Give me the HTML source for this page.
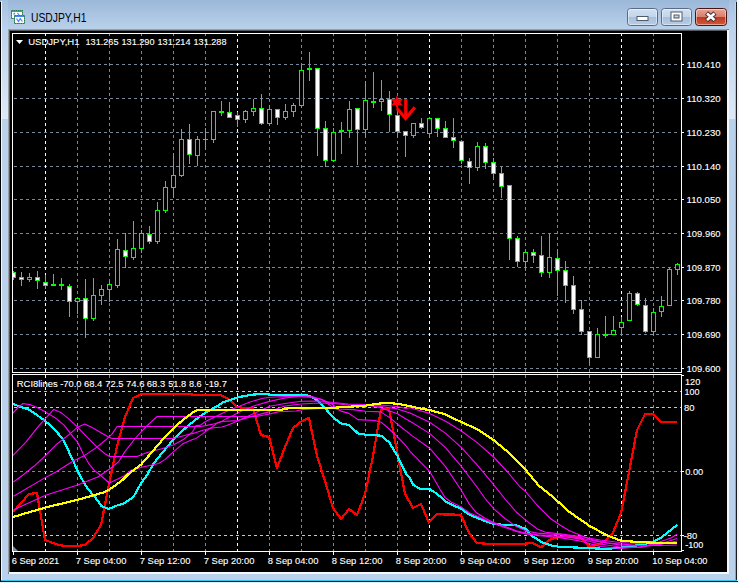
<!DOCTYPE html><html><head><meta charset="utf-8"><title>USDJPY,H1</title>
<style>html,body{margin:0;padding:0;background:#b9d1ea;overflow:hidden}svg{display:block}text{font-family:"Liberation Sans",sans-serif}</style></head><body>
<svg width="739" height="583" viewBox="0 0 739 583">
<defs>
<linearGradient id="tb" x1="0" y1="0" x2="0" y2="1"><stop offset="0" stop-color="#9bb8d9"/><stop offset="1" stop-color="#bdd3ec"/></linearGradient>
<linearGradient id="bt" x1="0" y1="0" x2="0" y2="1"><stop offset="0" stop-color="#d3e1f1"/><stop offset="0.48" stop-color="#c2d5ea"/><stop offset="0.52" stop-color="#a8c0dd"/><stop offset="1" stop-color="#b7cde6"/></linearGradient>
<linearGradient id="bc" x1="0" y1="0" x2="0" y2="1"><stop offset="0" stop-color="#e8a898"/><stop offset="0.48" stop-color="#d9806e"/><stop offset="0.52" stop-color="#bf3a20"/><stop offset="1" stop-color="#cf5a3c"/></linearGradient>
<linearGradient id="cy" x1="0" y1="0" x2="0" y2="1"><stop offset="0" stop-color="#a8dff6"/><stop offset="0.1" stop-color="#8fd8f5"/><stop offset="0.3" stop-color="#4cd0ff"/><stop offset="1" stop-color="#35c7f0"/></linearGradient>
<linearGradient id="hl" x1="0" y1="0" x2="0" y2="1"><stop offset="0" stop-color="#a5c0df"/><stop offset="0.25" stop-color="#bdd3ec"/><stop offset="1" stop-color="#dde9f6"/></linearGradient>
</defs>
<rect x="0" y="0" width="739" height="583" fill="#b9d1ea"/>
<rect x="0" y="0" width="739" height="32" fill="url(#tb)"/>
<g shape-rendering="crispEdges">
<rect x="0" y="2" width="1" height="581" fill="#000"/>
<rect x="1" y="1" width="1" height="580" fill="#f4f8fc"/>
<rect x="737" y="0" width="2" height="583" fill="#f4f7fb"/>
<rect x="736" y="2" width="1" height="580" fill="#1a1a1a"/>
<rect x="735" y="2" width="1" height="579" fill="url(#cy)"/>
<rect x="2" y="0" width="6" height="119" fill="url(#hl)"/>
<rect x="729" y="0" width="6" height="119" fill="url(#hl)"/>
<rect x="0" y="581" width="738" height="1" fill="#1a1a1a"/>
<rect x="1" y="580" width="736" height="1" fill="#35c7f0"/>
<rect x="0" y="582" width="739" height="1" fill="#e8eef5"/>
<rect x="8" y="29" width="721" height="545" fill="#6e7a88"/>
<rect x="9" y="30" width="720" height="544" fill="#f4f8fc"/>
<rect x="8" y="29" width="719" height="543" fill="#9a9ea3"/>
<rect x="9" y="30" width="718" height="542" fill="#55585c"/>
<rect x="10" y="31" width="717" height="541" fill="#000"/>
</g>
<g shape-rendering="crispEdges" fill="none" stroke-width="1">
<line x1="14" x2="680" y1="64.5" y2="64.5" stroke="#778899" stroke-dasharray="3 3"/>
<line x1="14" x2="680" y1="98.5" y2="98.5" stroke="#778899" stroke-dasharray="3 3"/>
<line x1="14" x2="680" y1="132.5" y2="132.5" stroke="#778899" stroke-dasharray="3 3"/>
<line x1="14" x2="680" y1="166.5" y2="166.5" stroke="#778899" stroke-dasharray="3 3"/>
<line x1="14" x2="680" y1="199.5" y2="199.5" stroke="#778899" stroke-dasharray="3 3"/>
<line x1="14" x2="680" y1="233.5" y2="233.5" stroke="#778899" stroke-dasharray="3 3"/>
<line x1="14" x2="680" y1="267.5" y2="267.5" stroke="#778899" stroke-dasharray="3 3"/>
<line x1="14" x2="680" y1="300.5" y2="300.5" stroke="#778899" stroke-dasharray="3 3"/>
<line x1="14" x2="680" y1="334.5" y2="334.5" stroke="#778899" stroke-dasharray="3 3"/>
<line x1="14" x2="680" y1="368.5" y2="368.5" stroke="#778899" stroke-dasharray="3 3"/>
<line x1="45.5" x2="45.5" y1="33" y2="372" stroke="#ffffff" stroke-dasharray="3 3"/>
<line x1="45.5" x2="45.5" y1="375" y2="551" stroke="#ffffff" stroke-dasharray="3 3"/>
<line x1="77.5" x2="77.5" y1="33" y2="372" stroke="#778899" stroke-dasharray="3 3"/>
<line x1="77.5" x2="77.5" y1="375" y2="551" stroke="#778899" stroke-dasharray="3 3"/>
<line x1="109.5" x2="109.5" y1="33" y2="372" stroke="#778899" stroke-dasharray="3 3"/>
<line x1="109.5" x2="109.5" y1="375" y2="551" stroke="#778899" stroke-dasharray="3 3"/>
<line x1="141.5" x2="141.5" y1="33" y2="372" stroke="#778899" stroke-dasharray="3 3"/>
<line x1="141.5" x2="141.5" y1="375" y2="551" stroke="#778899" stroke-dasharray="3 3"/>
<line x1="173.5" x2="173.5" y1="33" y2="372" stroke="#778899" stroke-dasharray="3 3"/>
<line x1="173.5" x2="173.5" y1="375" y2="551" stroke="#778899" stroke-dasharray="3 3"/>
<line x1="205.5" x2="205.5" y1="33" y2="372" stroke="#778899" stroke-dasharray="3 3"/>
<line x1="205.5" x2="205.5" y1="375" y2="551" stroke="#778899" stroke-dasharray="3 3"/>
<line x1="237.5" x2="237.5" y1="33" y2="372" stroke="#ffffff" stroke-dasharray="3 3"/>
<line x1="237.5" x2="237.5" y1="375" y2="551" stroke="#ffffff" stroke-dasharray="3 3"/>
<line x1="269.5" x2="269.5" y1="33" y2="372" stroke="#778899" stroke-dasharray="3 3"/>
<line x1="269.5" x2="269.5" y1="375" y2="551" stroke="#778899" stroke-dasharray="3 3"/>
<line x1="301.5" x2="301.5" y1="33" y2="372" stroke="#778899" stroke-dasharray="3 3"/>
<line x1="301.5" x2="301.5" y1="375" y2="551" stroke="#778899" stroke-dasharray="3 3"/>
<line x1="333.5" x2="333.5" y1="33" y2="372" stroke="#778899" stroke-dasharray="3 3"/>
<line x1="333.5" x2="333.5" y1="375" y2="551" stroke="#778899" stroke-dasharray="3 3"/>
<line x1="365.5" x2="365.5" y1="33" y2="372" stroke="#778899" stroke-dasharray="3 3"/>
<line x1="365.5" x2="365.5" y1="375" y2="551" stroke="#778899" stroke-dasharray="3 3"/>
<line x1="397.5" x2="397.5" y1="33" y2="372" stroke="#778899" stroke-dasharray="3 3"/>
<line x1="397.5" x2="397.5" y1="375" y2="551" stroke="#778899" stroke-dasharray="3 3"/>
<line x1="429.5" x2="429.5" y1="33" y2="372" stroke="#ffffff" stroke-dasharray="3 3"/>
<line x1="429.5" x2="429.5" y1="375" y2="551" stroke="#ffffff" stroke-dasharray="3 3"/>
<line x1="461.5" x2="461.5" y1="33" y2="372" stroke="#778899" stroke-dasharray="3 3"/>
<line x1="461.5" x2="461.5" y1="375" y2="551" stroke="#778899" stroke-dasharray="3 3"/>
<line x1="493.5" x2="493.5" y1="33" y2="372" stroke="#778899" stroke-dasharray="3 3"/>
<line x1="493.5" x2="493.5" y1="375" y2="551" stroke="#778899" stroke-dasharray="3 3"/>
<line x1="525.5" x2="525.5" y1="33" y2="372" stroke="#778899" stroke-dasharray="3 3"/>
<line x1="525.5" x2="525.5" y1="375" y2="551" stroke="#778899" stroke-dasharray="3 3"/>
<line x1="557.5" x2="557.5" y1="33" y2="372" stroke="#778899" stroke-dasharray="3 3"/>
<line x1="557.5" x2="557.5" y1="375" y2="551" stroke="#778899" stroke-dasharray="3 3"/>
<line x1="589.5" x2="589.5" y1="33" y2="372" stroke="#778899" stroke-dasharray="3 3"/>
<line x1="589.5" x2="589.5" y1="375" y2="551" stroke="#778899" stroke-dasharray="3 3"/>
<line x1="621.5" x2="621.5" y1="33" y2="372" stroke="#ffffff" stroke-dasharray="3 3"/>
<line x1="621.5" x2="621.5" y1="375" y2="551" stroke="#ffffff" stroke-dasharray="3 3"/>
<line x1="653.5" x2="653.5" y1="33" y2="372" stroke="#778899" stroke-dasharray="3 3"/>
<line x1="653.5" x2="653.5" y1="375" y2="551" stroke="#778899" stroke-dasharray="3 3"/>
<line x1="14" x2="681" y1="391.5" y2="391.5" stroke="#c8c8c8" stroke-dasharray="3 3"/>
<line x1="14" x2="681" y1="407.5" y2="407.5" stroke="#c8c8c8" stroke-dasharray="3 3"/>
<line x1="14" x2="681" y1="471.5" y2="471.5" stroke="#778899" stroke-dasharray="3 3"/>
<line x1="14" x2="681" y1="535.5" y2="535.5" stroke="#c8c8c8" stroke-dasharray="3 3"/>
</g>
<clipPath id="cc"><rect x="13" y="34" width="668" height="338"/></clipPath><g shape-rendering="crispEdges" clip-path="url(#cc)">
<rect x="13" y="271" width="1" height="9" fill="#00ff00"/>
<rect x="11" y="272" width="5" height="6" fill="#00ff00"/>
<rect x="12" y="273" width="3" height="4" fill="#fff"/>
<rect x="21" y="272" width="1" height="14" fill="#00ff00"/>
<rect x="19" y="277" width="5" height="3" fill="#00ff00"/>
<rect x="20" y="278" width="3" height="1" fill="#fff"/>
<rect x="29" y="273" width="1" height="9" fill="#00ff00"/>
<rect x="27" y="277" width="5" height="3" fill="#00ff00"/>
<rect x="28" y="278" width="3" height="1" fill="#000"/>
<rect x="37" y="271" width="1" height="18" fill="#00ff00"/>
<rect x="35" y="277" width="5" height="4" fill="#00ff00"/>
<rect x="36" y="278" width="3" height="2" fill="#fff"/>
<rect x="45" y="275" width="1" height="14" fill="#00ff00"/>
<rect x="43" y="282" width="5" height="4" fill="#00ff00"/>
<rect x="44" y="283" width="3" height="2" fill="#fff"/>
<rect x="53" y="274" width="1" height="12" fill="#00ff00"/>
<rect x="51" y="284" width="5" height="2" fill="#00ff00"/>
<rect x="61" y="278" width="1" height="12" fill="#00ff00"/>
<rect x="59" y="284" width="5" height="2" fill="#00ff00"/>
<rect x="69" y="284" width="1" height="33" fill="#00ff00"/>
<rect x="67" y="286" width="5" height="16" fill="#00ff00"/>
<rect x="68" y="287" width="3" height="14" fill="#fff"/>
<rect x="77" y="297" width="1" height="17" fill="#00ff00"/>
<rect x="75" y="298" width="5" height="4" fill="#00ff00"/>
<rect x="76" y="299" width="3" height="2" fill="#000"/>
<rect x="85" y="279" width="1" height="59" fill="#00ff00"/>
<rect x="83" y="298" width="5" height="21" fill="#00ff00"/>
<rect x="84" y="299" width="3" height="19" fill="#fff"/>
<rect x="93" y="278" width="1" height="43" fill="#00ff00"/>
<rect x="91" y="295" width="5" height="24" fill="#00ff00"/>
<rect x="92" y="296" width="3" height="22" fill="#000"/>
<rect x="101" y="285" width="1" height="20" fill="#00ff00"/>
<rect x="99" y="289" width="5" height="7" fill="#00ff00"/>
<rect x="100" y="290" width="3" height="5" fill="#000"/>
<rect x="109" y="281" width="1" height="21" fill="#00ff00"/>
<rect x="107" y="284" width="5" height="6" fill="#00ff00"/>
<rect x="108" y="285" width="3" height="4" fill="#000"/>
<rect x="117" y="239" width="1" height="49" fill="#00ff00"/>
<rect x="115" y="249" width="5" height="37" fill="#00ff00"/>
<rect x="116" y="250" width="3" height="35" fill="#000"/>
<rect x="125" y="233" width="1" height="35" fill="#00ff00"/>
<rect x="123" y="250" width="5" height="7" fill="#00ff00"/>
<rect x="124" y="251" width="3" height="5" fill="#fff"/>
<rect x="133" y="221" width="1" height="39" fill="#00ff00"/>
<rect x="131" y="248" width="5" height="10" fill="#00ff00"/>
<rect x="132" y="249" width="3" height="8" fill="#000"/>
<rect x="141" y="230" width="1" height="23" fill="#00ff00"/>
<rect x="139" y="233" width="5" height="16" fill="#00ff00"/>
<rect x="140" y="234" width="3" height="14" fill="#000"/>
<rect x="149" y="226" width="1" height="18" fill="#00ff00"/>
<rect x="147" y="234" width="5" height="8" fill="#00ff00"/>
<rect x="148" y="235" width="3" height="6" fill="#fff"/>
<rect x="157" y="202" width="1" height="42" fill="#00ff00"/>
<rect x="155" y="210" width="5" height="32" fill="#00ff00"/>
<rect x="156" y="211" width="3" height="30" fill="#000"/>
<rect x="165" y="181" width="1" height="32" fill="#00ff00"/>
<rect x="163" y="187" width="5" height="24" fill="#00ff00"/>
<rect x="164" y="188" width="3" height="22" fill="#000"/>
<rect x="173" y="153" width="1" height="45" fill="#00ff00"/>
<rect x="171" y="175" width="5" height="13" fill="#00ff00"/>
<rect x="172" y="176" width="3" height="11" fill="#000"/>
<rect x="181" y="129" width="1" height="48" fill="#00ff00"/>
<rect x="179" y="139" width="5" height="37" fill="#00ff00"/>
<rect x="180" y="140" width="3" height="35" fill="#000"/>
<rect x="189" y="124" width="1" height="40" fill="#00ff00"/>
<rect x="187" y="139" width="5" height="16" fill="#00ff00"/>
<rect x="188" y="140" width="3" height="14" fill="#fff"/>
<rect x="197" y="136" width="1" height="30" fill="#00ff00"/>
<rect x="195" y="139" width="5" height="17" fill="#00ff00"/>
<rect x="196" y="140" width="3" height="15" fill="#000"/>
<rect x="205" y="128" width="1" height="22" fill="#00ff00"/>
<rect x="203" y="139" width="5" height="1" fill="#00ff00"/>
<rect x="213" y="111" width="1" height="32" fill="#00ff00"/>
<rect x="211" y="111" width="5" height="29" fill="#00ff00"/>
<rect x="212" y="112" width="3" height="27" fill="#000"/>
<rect x="221" y="101" width="1" height="15" fill="#00ff00"/>
<rect x="219" y="111" width="5" height="2" fill="#00ff00"/>
<rect x="229" y="102" width="1" height="16" fill="#00ff00"/>
<rect x="227" y="112" width="5" height="6" fill="#00ff00"/>
<rect x="228" y="113" width="3" height="4" fill="#fff"/>
<rect x="237" y="112" width="1" height="15" fill="#00ff00"/>
<rect x="235" y="115" width="5" height="5" fill="#00ff00"/>
<rect x="236" y="116" width="3" height="3" fill="#fff"/>
<rect x="245" y="110" width="1" height="13" fill="#00ff00"/>
<rect x="243" y="111" width="5" height="9" fill="#00ff00"/>
<rect x="244" y="112" width="3" height="7" fill="#000"/>
<rect x="253" y="99" width="1" height="17" fill="#00ff00"/>
<rect x="251" y="108" width="5" height="4" fill="#00ff00"/>
<rect x="252" y="109" width="3" height="2" fill="#000"/>
<rect x="261" y="94" width="1" height="31" fill="#00ff00"/>
<rect x="259" y="108" width="5" height="16" fill="#00ff00"/>
<rect x="260" y="109" width="3" height="14" fill="#fff"/>
<rect x="269" y="105" width="1" height="21" fill="#00ff00"/>
<rect x="267" y="109" width="5" height="15" fill="#00ff00"/>
<rect x="268" y="110" width="3" height="13" fill="#000"/>
<rect x="277" y="109" width="1" height="16" fill="#00ff00"/>
<rect x="275" y="109" width="5" height="9" fill="#00ff00"/>
<rect x="276" y="110" width="3" height="7" fill="#fff"/>
<rect x="285" y="104" width="1" height="16" fill="#00ff00"/>
<rect x="283" y="111" width="5" height="7" fill="#00ff00"/>
<rect x="284" y="112" width="3" height="5" fill="#000"/>
<rect x="293" y="103" width="1" height="14" fill="#00ff00"/>
<rect x="291" y="105" width="5" height="7" fill="#00ff00"/>
<rect x="292" y="106" width="3" height="5" fill="#000"/>
<rect x="301" y="65" width="1" height="43" fill="#00ff00"/>
<rect x="299" y="70" width="5" height="36" fill="#00ff00"/>
<rect x="300" y="71" width="3" height="34" fill="#000"/>
<rect x="309" y="52" width="1" height="29" fill="#00ff00"/>
<rect x="307" y="68" width="5" height="2" fill="#00ff00"/>
<rect x="317" y="68" width="1" height="88" fill="#00ff00"/>
<rect x="315" y="68" width="5" height="61" fill="#00ff00"/>
<rect x="316" y="69" width="3" height="59" fill="#fff"/>
<rect x="325" y="121" width="1" height="46" fill="#00ff00"/>
<rect x="323" y="128" width="5" height="33" fill="#00ff00"/>
<rect x="324" y="129" width="3" height="31" fill="#fff"/>
<rect x="333" y="128" width="1" height="34" fill="#00ff00"/>
<rect x="331" y="132" width="5" height="29" fill="#00ff00"/>
<rect x="332" y="133" width="3" height="27" fill="#000"/>
<rect x="341" y="122" width="1" height="32" fill="#00ff00"/>
<rect x="339" y="130" width="5" height="2" fill="#00ff00"/>
<rect x="349" y="101" width="1" height="37" fill="#00ff00"/>
<rect x="347" y="109" width="5" height="22" fill="#00ff00"/>
<rect x="348" y="110" width="3" height="20" fill="#000"/>
<rect x="357" y="108" width="1" height="57" fill="#00ff00"/>
<rect x="355" y="108" width="5" height="22" fill="#00ff00"/>
<rect x="356" y="109" width="3" height="20" fill="#fff"/>
<rect x="365" y="81" width="1" height="57" fill="#00ff00"/>
<rect x="363" y="100" width="5" height="30" fill="#00ff00"/>
<rect x="364" y="101" width="3" height="28" fill="#000"/>
<rect x="373" y="72" width="1" height="36" fill="#00ff00"/>
<rect x="371" y="101" width="5" height="2" fill="#00ff00"/>
<rect x="381" y="80" width="1" height="31" fill="#00ff00"/>
<rect x="379" y="99" width="5" height="3" fill="#00ff00"/>
<rect x="380" y="100" width="3" height="1" fill="#000"/>
<rect x="389" y="91" width="1" height="41" fill="#00ff00"/>
<rect x="387" y="99" width="5" height="16" fill="#00ff00"/>
<rect x="388" y="100" width="3" height="14" fill="#fff"/>
<rect x="397" y="113" width="1" height="25" fill="#00ff00"/>
<rect x="395" y="115" width="5" height="17" fill="#00ff00"/>
<rect x="396" y="116" width="3" height="15" fill="#fff"/>
<rect x="405" y="131" width="1" height="26" fill="#00ff00"/>
<rect x="403" y="131" width="5" height="5" fill="#00ff00"/>
<rect x="404" y="132" width="3" height="3" fill="#fff"/>
<rect x="413" y="123" width="1" height="15" fill="#00ff00"/>
<rect x="411" y="123" width="5" height="13" fill="#00ff00"/>
<rect x="412" y="124" width="3" height="11" fill="#000"/>
<rect x="421" y="118" width="1" height="11" fill="#00ff00"/>
<rect x="419" y="123" width="5" height="5" fill="#00ff00"/>
<rect x="420" y="124" width="3" height="3" fill="#fff"/>
<rect x="429" y="117" width="1" height="21" fill="#00ff00"/>
<rect x="427" y="118" width="5" height="16" fill="#00ff00"/>
<rect x="428" y="119" width="3" height="14" fill="#000"/>
<rect x="437" y="118" width="1" height="19" fill="#00ff00"/>
<rect x="435" y="118" width="5" height="11" fill="#00ff00"/>
<rect x="436" y="119" width="3" height="9" fill="#fff"/>
<rect x="445" y="121" width="1" height="17" fill="#00ff00"/>
<rect x="443" y="128" width="5" height="10" fill="#00ff00"/>
<rect x="444" y="129" width="3" height="8" fill="#fff"/>
<rect x="453" y="118" width="1" height="30" fill="#00ff00"/>
<rect x="451" y="137" width="5" height="4" fill="#00ff00"/>
<rect x="452" y="138" width="3" height="2" fill="#fff"/>
<rect x="461" y="140" width="1" height="24" fill="#00ff00"/>
<rect x="459" y="141" width="5" height="20" fill="#00ff00"/>
<rect x="460" y="142" width="3" height="18" fill="#fff"/>
<rect x="469" y="158" width="1" height="26" fill="#00ff00"/>
<rect x="467" y="161" width="5" height="7" fill="#00ff00"/>
<rect x="468" y="162" width="3" height="5" fill="#fff"/>
<rect x="477" y="142" width="1" height="29" fill="#00ff00"/>
<rect x="475" y="146" width="5" height="22" fill="#00ff00"/>
<rect x="476" y="147" width="3" height="20" fill="#000"/>
<rect x="485" y="143" width="1" height="26" fill="#00ff00"/>
<rect x="483" y="146" width="5" height="17" fill="#00ff00"/>
<rect x="484" y="147" width="3" height="15" fill="#fff"/>
<rect x="493" y="158" width="1" height="22" fill="#00ff00"/>
<rect x="491" y="162" width="5" height="12" fill="#00ff00"/>
<rect x="492" y="163" width="3" height="10" fill="#fff"/>
<rect x="501" y="167" width="1" height="31" fill="#00ff00"/>
<rect x="499" y="173" width="5" height="14" fill="#00ff00"/>
<rect x="500" y="174" width="3" height="12" fill="#fff"/>
<rect x="509" y="185" width="1" height="75" fill="#00ff00"/>
<rect x="507" y="185" width="5" height="54" fill="#00ff00"/>
<rect x="508" y="186" width="3" height="52" fill="#fff"/>
<rect x="517" y="236" width="1" height="31" fill="#00ff00"/>
<rect x="515" y="238" width="5" height="24" fill="#00ff00"/>
<rect x="516" y="239" width="3" height="22" fill="#fff"/>
<rect x="525" y="250" width="1" height="21" fill="#00ff00"/>
<rect x="523" y="252" width="5" height="10" fill="#00ff00"/>
<rect x="524" y="253" width="3" height="8" fill="#000"/>
<rect x="533" y="249" width="1" height="14" fill="#00ff00"/>
<rect x="531" y="252" width="5" height="4" fill="#00ff00"/>
<rect x="532" y="253" width="3" height="2" fill="#fff"/>
<rect x="541" y="236" width="1" height="41" fill="#00ff00"/>
<rect x="539" y="255" width="5" height="18" fill="#00ff00"/>
<rect x="540" y="256" width="3" height="16" fill="#fff"/>
<rect x="549" y="234" width="1" height="44" fill="#00ff00"/>
<rect x="547" y="257" width="5" height="16" fill="#00ff00"/>
<rect x="548" y="258" width="3" height="14" fill="#000"/>
<rect x="557" y="249" width="1" height="47" fill="#00ff00"/>
<rect x="555" y="258" width="5" height="13" fill="#00ff00"/>
<rect x="556" y="259" width="3" height="11" fill="#fff"/>
<rect x="565" y="261" width="1" height="42" fill="#00ff00"/>
<rect x="563" y="270" width="5" height="16" fill="#00ff00"/>
<rect x="564" y="271" width="3" height="14" fill="#fff"/>
<rect x="573" y="276" width="1" height="38" fill="#00ff00"/>
<rect x="571" y="285" width="5" height="25" fill="#00ff00"/>
<rect x="572" y="286" width="3" height="23" fill="#fff"/>
<rect x="581" y="300" width="1" height="35" fill="#00ff00"/>
<rect x="579" y="309" width="5" height="23" fill="#00ff00"/>
<rect x="580" y="310" width="3" height="21" fill="#fff"/>
<rect x="589" y="331" width="1" height="33" fill="#00ff00"/>
<rect x="587" y="331" width="5" height="27" fill="#00ff00"/>
<rect x="588" y="332" width="3" height="25" fill="#fff"/>
<rect x="597" y="328" width="1" height="30" fill="#00ff00"/>
<rect x="595" y="334" width="5" height="24" fill="#00ff00"/>
<rect x="596" y="335" width="3" height="22" fill="#000"/>
<rect x="605" y="316" width="1" height="22" fill="#00ff00"/>
<rect x="603" y="334" width="5" height="2" fill="#00ff00"/>
<rect x="613" y="316" width="1" height="19" fill="#00ff00"/>
<rect x="611" y="330" width="5" height="5" fill="#00ff00"/>
<rect x="612" y="331" width="3" height="3" fill="#000"/>
<rect x="621" y="317" width="1" height="19" fill="#00ff00"/>
<rect x="619" y="322" width="5" height="6" fill="#00ff00"/>
<rect x="620" y="323" width="3" height="4" fill="#000"/>
<rect x="629" y="291" width="1" height="30" fill="#00ff00"/>
<rect x="627" y="293" width="5" height="28" fill="#00ff00"/>
<rect x="628" y="294" width="3" height="26" fill="#000"/>
<rect x="637" y="292" width="1" height="14" fill="#00ff00"/>
<rect x="635" y="293" width="5" height="12" fill="#00ff00"/>
<rect x="636" y="294" width="3" height="10" fill="#fff"/>
<rect x="645" y="298" width="1" height="35" fill="#00ff00"/>
<rect x="643" y="305" width="5" height="27" fill="#00ff00"/>
<rect x="644" y="306" width="3" height="25" fill="#fff"/>
<rect x="653" y="308" width="1" height="27" fill="#00ff00"/>
<rect x="651" y="312" width="5" height="20" fill="#00ff00"/>
<rect x="652" y="313" width="3" height="18" fill="#000"/>
<rect x="661" y="296" width="1" height="21" fill="#00ff00"/>
<rect x="659" y="306" width="5" height="6" fill="#00ff00"/>
<rect x="660" y="307" width="3" height="4" fill="#000"/>
<rect x="669" y="267" width="1" height="39" fill="#00ff00"/>
<rect x="667" y="269" width="5" height="37" fill="#00ff00"/>
<rect x="668" y="270" width="3" height="35" fill="#000"/>
<rect x="677" y="263" width="1" height="12" fill="#00ff00"/>
<rect x="675" y="264" width="5" height="6" fill="#00ff00"/>
<rect x="676" y="265" width="3" height="4" fill="#000"/>
</g>
<polygon points="397.0,95.3 398.7,99.3 403.0,98.8 400.4,102.2 403.0,105.7 398.7,105.1 397.0,109.1 395.3,105.1 391.0,105.7 393.6,102.2 391.0,98.8 395.3,99.3" fill="#ff0000"/>
<g stroke="#ff0000" fill="none" stroke-linecap="butt" stroke-linejoin="miter"><path d="M405.8 99V118" stroke-width="3.4"/><path d="M396.9 108.2L405.6 118.6L414.9 107.3" stroke-width="3.2"/></g>
<g shape-rendering="crispEdges">
<polyline points="13.0,512.0 21.0,503.0 29.0,494.0 37.0,493.0 45.0,540.0 53.0,543.0 61.0,545.5 69.0,546.0 77.0,546.0 85.0,545.0 93.0,538.0 101.0,525.0 109.0,484.0 117.0,446.0 125.0,417.0 133.0,398.0 141.0,394.3 149.0,394.2 157.0,394.2 165.0,394.2 173.0,394.2 181.0,394.2 189.0,394.2 197.0,395.0 205.0,395.0 213.0,395.0 221.0,395.0 229.0,399.5 237.0,407.0 245.0,408.0 253.0,408.3 261.0,435.0 269.0,437.0 277.0,468.0 285.0,447.0 293.0,428.0 301.0,421.5 309.0,418.0 317.0,456.0 325.0,481.0 333.0,508.0 341.0,519.0 349.0,509.0 357.0,515.0 365.0,494.0 373.0,456.0 381.0,409.5 389.0,409.0 397.0,451.0 405.0,494.0 413.0,508.0 421.0,504.0 429.0,522.5 437.0,514.0 445.0,514.5 453.0,514.5 461.0,515.0 469.0,533.0 477.0,543.0 485.0,543.6 493.0,543.6 501.0,543.6 509.0,543.6 517.0,543.6 525.0,543.6 533.0,543.0 541.0,547.5 549.0,540.0 557.0,537.3 565.0,536.3 573.0,536.5 581.0,538.0 589.0,546.5 597.0,545.0 605.0,541.5 613.0,532.5 621.0,513.0 629.0,472.0 637.0,430.0 645.0,414.0 653.0,414.0 661.0,422.0 669.0,422.0 677.0,422.0" fill="none" stroke="#ff0000" stroke-width="2.2" stroke-linejoin="round" stroke-linecap="butt"/>
<polyline points="13.0,404.0 20.2,406.7 29.8,410.1 43.6,419.7 53.2,427.9 62.8,438.9 67.0,447.5 72.4,459.5 79.2,473.9 84.5,483.6 88.0,489.0 95.3,497.5 101.5,506.0 108.5,509.0 117.0,505.5 124.0,503.4 133.4,497.0 141.5,482.4 147.8,474.0 152.9,464.6 161.7,453.4 173.3,439.6 186.4,427.2 195.7,419.5 205.5,412.6 214.4,407.8 223.1,402.4 230.6,399.7 237.5,397.5 244.7,395.9 253.4,394.6 263.1,393.7 269.6,394.6 278.8,395.0 305.9,395.0 311.3,396.8 316.7,400.2 322.1,405.1 327.5,411.0 333.4,417.7 341.2,423.6 349.0,425.0 358.0,433.4 365.3,434.6 381.4,435.7 389.2,442.4 397.4,455.7 405.9,473.6 410.0,478.0 413.3,485.0 420.0,488.7 429.6,489.2 436.8,493.6 445.7,501.4 454.6,505.9 461.5,509.0 469.2,514.5 480.6,519.3 493.6,524.0 505.0,525.0 516.3,525.3 525.6,529.0 532.6,536.3 541.5,542.0 550.4,545.3 560.0,546.9 578.4,547.6 597.4,548.5 606.8,548.9 621.6,547.6 631.5,546.2 640.9,544.7 653.2,541.9 661.8,537.1 671.2,529.6 677.3,524.8" fill="none" stroke="#00ffff" stroke-width="2.2" stroke-linejoin="round" stroke-linecap="butt"/>
</g><g>
<polyline points="13.5,509.8 45.6,495.2 77.6,485.1 98.4,476.7 109.5,469.0 118.5,462.0 124.7,451.9 135.5,438.0 146.3,426.4 157.1,416.5 256.0,416.5 269.6,414.0 278.8,411.6 296.0,411.0 303.7,409.4 320.0,408.5 337.3,407.0 348.0,406.0 365.0,405.5 381.0,405.0 397.0,406.5 405.9,408.5 410.0,407.8 429.6,413.4 445.7,421.2 461.7,431.2 476.9,442.4 493.6,457.0 508.1,472.5 519.6,486.5 525.6,491.7 537.4,505.5 550.4,518.5 560.0,525.0 568.9,530.5 589.4,539.0 606.8,542.8 620.0,544.0 640.0,545.5 660.0,545.5 677.0,545.0" fill="none" stroke="#ff00ff" stroke-width="1.1" stroke-linejoin="bevel" stroke-linecap="butt"/>
<polyline points="13.5,496.3 45.6,477.4 55.9,472.0 66.9,465.0 73.7,460.8 84.7,455.4 97.0,447.1 105.3,440.3 112.0,434.1 117.0,426.5 200.0,426.5 205.7,425.6 214.8,423.8 222.0,421.5 237.5,420.6 250.0,417.0 269.6,411.6 285.0,406.0 301.0,404.0 320.0,403.0 333.5,403.5 348.0,405.0 365.0,405.0 381.0,406.5 397.4,408.9 410.0,412.9 429.6,422.3 445.7,433.4 461.7,447.9 476.9,464.7 493.6,484.7 505.0,499.0 516.3,512.0 525.6,520.1 537.4,529.0 545.6,532.3 560.0,533.9 580.0,536.5 600.0,540.0 620.0,542.5 640.0,543.5 660.0,543.5 677.0,543.0" fill="none" stroke="#ff00ff" stroke-width="1.1" stroke-linejoin="bevel" stroke-linecap="butt"/>
<polyline points="13.5,482.0 23.0,475.0 33.9,466.3 45.6,455.4 57.3,443.7 69.6,434.1 77.6,427.2 84.7,424.1 91.6,427.2 99.8,432.0 108.0,436.8 112.0,438.5 173.3,438.5 186.4,435.0 196.0,432.6 203.8,430.0 211.6,428.0 222.0,427.0 226.5,425.4 232.4,423.2 237.5,420.9 244.0,418.0 255.0,413.0 269.6,406.2 285.0,403.5 301.0,401.3 320.0,401.0 333.5,402.5 348.0,404.0 365.0,404.5 381.4,408.0 397.4,413.8 405.9,419.0 410.0,421.2 429.6,433.4 445.7,447.9 461.7,466.9 476.9,487.0 485.5,499.0 493.6,508.7 505.0,518.5 516.3,526.6 525.6,530.7 537.4,533.1 560.0,534.7 580.0,538.0 600.0,542.0 620.0,545.0 640.0,546.0 660.0,544.5 677.0,541.0" fill="none" stroke="#ff00ff" stroke-width="1.1" stroke-linejoin="bevel" stroke-linecap="butt"/>
<polyline points="13.0,455.4 25.7,442.3 39.4,425.2 45.6,418.3 53.8,409.4 61.4,412.8 69.6,419.7 77.6,427.2 86.1,436.2 97.0,447.1 105.3,454.0 109.6,456.5 137.0,456.5 146.3,452.7 161.7,448.8 173.3,445.0 183.3,439.6 192.6,431.8 196.0,425.6 200.0,425.4 205.7,421.5 214.8,417.0 223.9,412.4 228.5,410.5 237.5,407.0 250.0,402.0 262.0,398.5 269.6,397.2 285.0,396.5 300.0,396.5 311.0,397.5 322.0,399.5 333.5,405.0 338.0,409.0 353.0,409.6 365.4,411.2 380.8,411.9 390.4,418.1 397.5,424.2 412.3,435.9 429.6,448.2 445.7,466.9 461.4,490.5 469.2,503.9 476.5,512.8 485.5,518.5 493.6,522.5 505.0,526.6 516.3,530.7 525.6,533.1 537.4,534.7 560.0,536.3 580.0,539.0 600.0,544.0 620.0,547.0 640.0,547.5 660.0,544.0 677.0,538.5" fill="none" stroke="#ff00ff" stroke-width="1.1" stroke-linejoin="bevel" stroke-linecap="butt"/>
<polyline points="13.0,413.0 18.9,406.7 23.0,403.5 29.8,404.6 38.1,408.0 45.6,412.1 55.9,418.3 64.1,425.2 71.0,434.1 77.6,442.3 83.3,454.0 88.8,463.6 94.3,470.4 98.4,473.5 109.3,483.0 124.0,475.9 130.9,470.4 141.7,467.3 158.6,463.5 164.8,459.6 173.3,451.9 183.3,443.4 192.6,439.6 196.0,438.4 202.5,433.9 209.0,429.0 212.9,426.7 217.4,422.8 222.0,421.2 225.9,418.9 229.8,417.0 233.0,415.4 237.5,413.1 241.5,411.1 255.0,405.5 269.6,401.4 285.0,398.0 300.0,396.3 311.0,396.3 322.0,399.6 333.4,407.8 341.2,411.1 349.0,413.4 358.0,419.6 374.7,420.5 381.4,422.3 389.2,429.0 397.4,436.8 405.9,445.7 410.0,451.3 429.6,471.3 440.0,489.2 444.9,497.4 451.4,502.2 461.4,507.1 469.2,512.8 480.6,517.7 493.6,523.4 505.0,527.4 516.3,531.5 525.6,533.9 537.4,535.5 560.0,537.6 580.0,541.0 600.0,546.5 620.0,548.5 640.0,547.0 655.0,543.5 671.0,538.0 677.0,534.3" fill="none" stroke="#ff00ff" stroke-width="1.1" stroke-linejoin="bevel" stroke-linecap="butt"/>
</g><g shape-rendering="crispEdges">
<polyline points="13.0,517.0 45.6,507.5 77.6,499.8 104.6,492.1 109.5,489.5 117.2,484.0 122.0,480.5 128.2,474.3 134.0,469.8 141.3,464.3 154.3,449.4 165.3,436.4 174.9,426.7 185.8,417.8 193.0,412.3 197.2,410.0 280.0,410.0 286.4,408.7 290.0,408.0 333.0,407.8 365.7,405.6 385.8,402.7 399.2,404.0 410.0,406.2 422.0,408.9 429.6,410.0 445.7,414.5 461.7,422.3 476.9,429.0 493.6,440.0 508.1,452.2 522.0,465.6 539.1,486.0 550.0,494.5 557.6,501.2 568.9,511.6 589.4,525.8 606.8,535.3 621.6,540.9 637.1,541.9 653.2,542.8 677.3,542.8" fill="none" stroke="#ffff00" stroke-width="2.2" stroke-linejoin="round" stroke-linecap="butt"/>
</g>
<g shape-rendering="crispEdges" fill="#fff">
<rect x="12" y="33" width="670" height="1"/>
<rect x="12" y="33" width="1" height="519"/>
<rect x="681" y="33" width="1" height="519"/>
<rect x="12" y="372" width="670" height="1"/>
<rect x="12" y="373" width="670" height="1" fill="#000"/>
<rect x="12" y="374" width="670" height="1"/>
<rect x="12" y="551" width="670" height="1"/>
<rect x="682" y="64" width="2" height="1"/>
<rect x="682" y="98" width="2" height="1"/>
<rect x="682" y="132" width="2" height="1"/>
<rect x="682" y="166" width="2" height="1"/>
<rect x="682" y="199" width="2" height="1"/>
<rect x="682" y="233" width="2" height="1"/>
<rect x="682" y="267" width="2" height="1"/>
<rect x="682" y="300" width="2" height="1"/>
<rect x="682" y="334" width="2" height="1"/>
<rect x="682" y="368" width="2" height="1"/>
<rect x="682" y="375" width="2" height="1"/>
<rect x="682" y="471" width="2" height="1"/>
<rect x="682" y="535" width="2" height="1"/>
<rect x="682" y="550" width="2" height="1"/>
<rect x="13" y="552" width="1" height="3"/>
<rect x="77" y="552" width="1" height="3"/>
<rect x="141" y="552" width="1" height="3"/>
<rect x="205" y="552" width="1" height="3"/>
<rect x="269" y="552" width="1" height="3"/>
<rect x="333" y="552" width="1" height="3"/>
<rect x="397" y="552" width="1" height="3"/>
<rect x="461" y="552" width="1" height="3"/>
<rect x="525" y="552" width="1" height="3"/>
<rect x="589" y="552" width="1" height="3"/>
<rect x="653" y="552" width="1" height="3"/>
</g>
<polygon points="13,546 13,551 18,551" fill="#778899"/>
<g fill="#fff" font-size="9.6px" stroke="#fff" stroke-width="0.12">
<text x="686.6" y="67.6" textLength="34.0" lengthAdjust="spacingAndGlyphs">110.410</text>
<text x="686.6" y="101.6" textLength="34.0" lengthAdjust="spacingAndGlyphs">110.320</text>
<text x="686.6" y="135.6" textLength="34.0" lengthAdjust="spacingAndGlyphs">110.230</text>
<text x="686.6" y="169.6" textLength="34.0" lengthAdjust="spacingAndGlyphs">110.140</text>
<text x="686.6" y="202.6" textLength="34.0" lengthAdjust="spacingAndGlyphs">110.050</text>
<text x="686.6" y="236.6" textLength="34.0" lengthAdjust="spacingAndGlyphs">109.960</text>
<text x="686.6" y="270.6" textLength="34.0" lengthAdjust="spacingAndGlyphs">109.870</text>
<text x="686.6" y="303.6" textLength="34.0" lengthAdjust="spacingAndGlyphs">109.780</text>
<text x="686.6" y="337.6" textLength="34.0" lengthAdjust="spacingAndGlyphs">109.690</text>
<text x="686.6" y="371.6" textLength="34.0" lengthAdjust="spacingAndGlyphs">109.600</text>
<text x="684.9" y="385.0" textLength="15.4" lengthAdjust="spacingAndGlyphs">120</text>
<text x="684.5" y="394.7" textLength="15.0" lengthAdjust="spacingAndGlyphs">100</text>
<text x="684.0" y="410.7" textLength="10.5" lengthAdjust="spacingAndGlyphs">80</text>
<text x="685.2" y="475.0" textLength="18.1" lengthAdjust="spacingAndGlyphs">0.00</text>
<text x="683.7" y="539.0" textLength="13.6" lengthAdjust="spacingAndGlyphs">-80</text>
<text x="685.2" y="548.0" textLength="18.1" lengthAdjust="spacingAndGlyphs">-100</text>
<text x="11.7" y="564.3" textLength="47.6" lengthAdjust="spacingAndGlyphs">6 Sep 2021</text>
<text x="75.8" y="564.3" textLength="50.6" lengthAdjust="spacingAndGlyphs">7 Sep 04:00</text>
<text x="139.8" y="564.3" textLength="50.6" lengthAdjust="spacingAndGlyphs">7 Sep 12:00</text>
<text x="203.8" y="564.3" textLength="50.6" lengthAdjust="spacingAndGlyphs">7 Sep 20:00</text>
<text x="267.8" y="564.3" textLength="50.6" lengthAdjust="spacingAndGlyphs">8 Sep 04:00</text>
<text x="331.8" y="564.3" textLength="50.6" lengthAdjust="spacingAndGlyphs">8 Sep 12:00</text>
<text x="395.8" y="564.3" textLength="50.6" lengthAdjust="spacingAndGlyphs">8 Sep 20:00</text>
<text x="459.8" y="564.3" textLength="50.6" lengthAdjust="spacingAndGlyphs">9 Sep 04:00</text>
<text x="523.8" y="564.3" textLength="50.6" lengthAdjust="spacingAndGlyphs">9 Sep 12:00</text>
<text x="587.8" y="564.3" textLength="50.6" lengthAdjust="spacingAndGlyphs">9 Sep 20:00</text>
<text x="652.3" y="564.3" textLength="55.2" lengthAdjust="spacingAndGlyphs">10 Sep 04:00</text>
<text x="28.2" y="45.0" textLength="51.3" lengthAdjust="spacingAndGlyphs">USDJPY,H1</text>
<text x="85.5" y="45.0" textLength="33.0" lengthAdjust="spacingAndGlyphs">131.265</text>
<text x="121.5" y="45.0" textLength="33.0" lengthAdjust="spacingAndGlyphs">131.290</text>
<text x="157.5" y="45.0" textLength="33.0" lengthAdjust="spacingAndGlyphs">131.214</text>
<text x="193.5" y="45.0" textLength="33.0" lengthAdjust="spacingAndGlyphs">131.288</text>
<text x="16.8" y="387.2" textLength="40.8" lengthAdjust="spacingAndGlyphs">RCI8lines</text>
<text x="60.2" y="387.2" textLength="21.4" lengthAdjust="spacingAndGlyphs">-70.0</text>
<text x="83.9" y="387.2" textLength="18.4" lengthAdjust="spacingAndGlyphs">68.4</text>
<text x="105.3" y="387.2" textLength="18.1" lengthAdjust="spacingAndGlyphs">72.5</text>
<text x="126.0" y="387.2" textLength="18.5" lengthAdjust="spacingAndGlyphs">74.6</text>
<text x="146.8" y="387.2" textLength="18.4" lengthAdjust="spacingAndGlyphs">68.3</text>
<text x="168.2" y="387.2" textLength="18.1" lengthAdjust="spacingAndGlyphs">51.8</text>
<text x="189.0" y="387.2" textLength="12.7" lengthAdjust="spacingAndGlyphs">8.6</text>
<text x="205.5" y="387.2" textLength="21.4" lengthAdjust="spacingAndGlyphs">-19.7</text>
</g>
<polygon points="16,40 23,40 19.5,44" fill="#fff"/>
<text x="31" y="21.5" font-size="12px" fill="#000" textLength="55.4" lengthAdjust="spacingAndGlyphs">USDJPY,H1</text>
<g shape-rendering="crispEdges"><rect x="11" y="10" width="12" height="9" fill="#4a86f7"/><rect x="12" y="12" width="10" height="6" fill="#fffef4"/><rect x="14" y="15" width="11" height="9" fill="#4a86f7"/><rect x="15" y="17" width="9" height="6" fill="#fffef4"/>
<path d="M11.5 10.5H23M11.5 10.5V19M22.5 12V15M11.5 18.5H14M14.5 15.5H25M14.5 15.5V24M24.5 16V24M14.5 23.5H25" stroke="#2f7d5a" stroke-width="1" stroke-dasharray="1 1" fill="none"/></g>
<path d="M13.5 14.5l1.5-1.5M17.5 13l1.5 2" stroke="#4a86f7" fill="none" stroke-width="1.2"/><path d="M16.5 18.5l2 3 1.7-3 2.2 3" stroke="#4a86f7" fill="none" stroke-width="1.2"/>
<rect x="627.5" y="8.5" width="30" height="17" rx="3" ry="3" fill="url(#bt)" stroke="#5a6b85"/><rect x="628.5" y="9.5" width="28" height="15" rx="2" ry="2" fill="none" stroke="#fff" stroke-opacity="0.45"/>
<rect x="661.5" y="8.5" width="30" height="17" rx="3" ry="3" fill="url(#bt)" stroke="#5a6b85"/><rect x="662.5" y="9.5" width="28" height="15" rx="2" ry="2" fill="none" stroke="#fff" stroke-opacity="0.45"/>
<rect x="695.5" y="8.5" width="31" height="17" rx="3" ry="3" fill="url(#bc)" stroke="#4a1414"/><rect x="696.5" y="9.5" width="29" height="15" rx="2" ry="2" fill="none" stroke="#fff" stroke-opacity="0.45"/>
<rect x="637" y="16.5" width="11" height="4" fill="#fff" stroke="#50596a" stroke-width="1"/>
<rect x="672.5" y="13.5" width="8" height="6" fill="none" stroke="#50596a" stroke-width="4"/><rect x="672.5" y="13.5" width="8" height="6" fill="none" stroke="#fff" stroke-width="2"/>
<g stroke-linecap="butt"><path d="M706.5 13l8.5 7.5M715 13l-8.5 7.5" stroke="#4a3030" stroke-width="4.6" fill="none"/><path d="M707 13.5l7.5 6.5M714.5 13.5l-7.5 6.5" stroke="#fff" stroke-width="2.6" fill="none"/></g>
</svg></body></html>
